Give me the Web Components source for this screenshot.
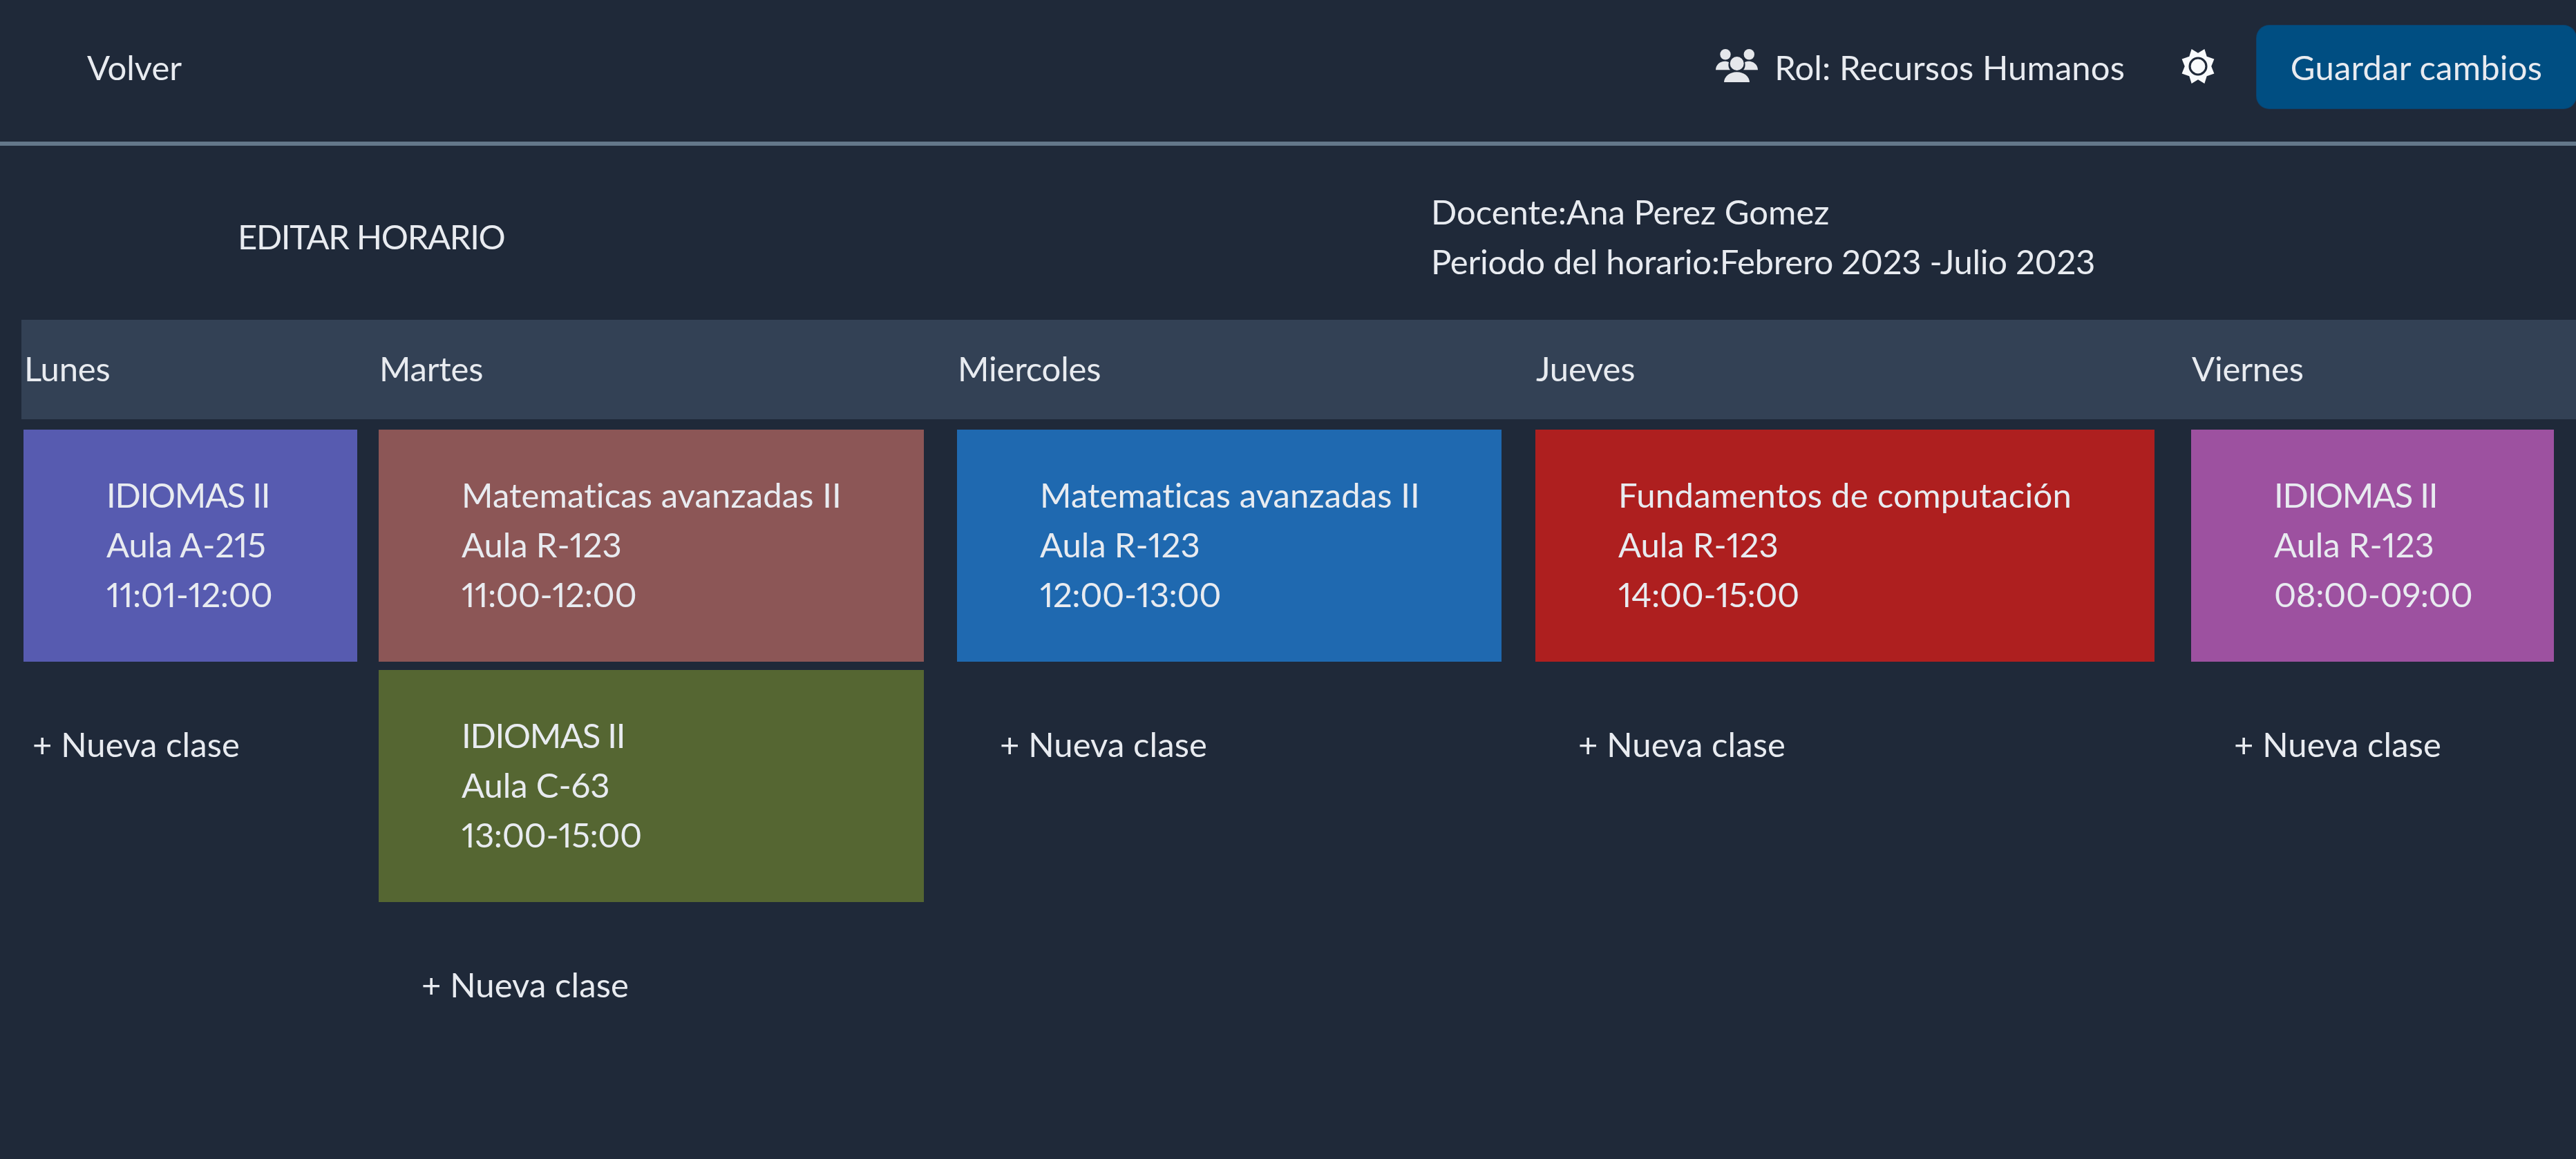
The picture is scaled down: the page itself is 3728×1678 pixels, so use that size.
<!doctype html>
<html lang="es"><head><meta charset="utf-8"><title>Editar horario</title>
<style>
html,body{margin:0;background:#1f2939;color:#e8ebf0;font:49px/72px Lato,"Liberation Sans",sans-serif;font-variant-ligatures:none;font-variant-numeric:proportional-nums;min-height:1678px}
</style></head><body>
<app-header></app-header>
<title-bar></title-bar>
<day-grid>
  <day-col day="Lunes" w="514" pr="31" add="14">
    <class-card color="#575bb0" name="IDIOMAS II" track="-1.3" room="Aula A-215" time="11:01-12:00"></class-card>
  </day-col>
  <day-col day="Martes" w="837" pr="48" add="63">
    <class-card color="#8c5656" name="Matematicas avanzadas II" track=".12" room="Aula R-123" time="11:00-12:00"></class-card>
    <class-card color="#556632" name="IDIOMAS II" track="-1.3" room="Aula C-63" time="13:00-15:00"></class-card>
  </day-col>
  <day-col day="Miercoles" w="837" pr="49" add="63">
    <class-card color="#1f69b0" name="Matematicas avanzadas II" track=".12" room="Aula R-123" time="12:00-13:00"></class-card>
  </day-col>
  <day-col day="Jueves" w="949" pr="53" add="63">
    <class-card color="#ae1f1f" name="Fundamentos de computación" track=".3" room="Aula R-123" time="14:00-15:00"></class-card>
  </day-col>
  <day-col day="Viernes" w="557" pr="32" add="63">
    <class-card color="#9d51a0" name="IDIOMAS II" track="-1.3" room="Aula R-123" time="08:00-09:00"></class-card>
  </day-col>
</day-grid>
<script>
const def=(n,html)=>customElements.define(n,class extends HTMLElement{
  constructor(){super();this.attachShadow({mode:'open'});if(typeof html!=='function')this.shadowRoot.innerHTML=html}
  connectedCallback(){if(typeof html==='function')this.shadowRoot.innerHTML=html(this)}
});
def('app-header',`<style>
:host{display:flex;align-items:center;height:205px;border-bottom:6px solid #64778a}
.row{display:flex;align-items:center;width:100%;height:120px;margin-top:-11px}
.back{margin-left:126px;margin-right:auto}
.role{display:flex;align-items:center;gap:24px}
.role span{letter-spacing:.1px}
.role svg{display:block;width:61px;height:48px;margin-top:-4px}
.sun{display:block;width:52px;height:52px;margin:-2px 59px 0 80px}
button{all:unset;box-sizing:border-box;width:462px;height:120px;background:#004e82;border-radius:18px;text-align:center;font:inherit;color:inherit;letter-spacing:.2px;box-shadow:0 0 0 1px #0a4370}
</style>
<div class="row">
<span class="back">Volver</span>
<span class="role">
<svg viewBox="0 0 61 48" fill="#e5e7eb"><circle cx="14" cy="7.7" r="7.7"/><circle cx="48.3" cy="7.7" r="7.7"/><circle cx="30.7" cy="21" r="10"/><path d="M12 48.3C12 40 20 33.3 30.5 33.3S49 40 49 48.3Z"/><path d="M0 30.3C0 23 6 17.7 13 17.7C15 17.7 17 18 19 19C18 22 18 27 21 30.3Z"/><path d="M61 30.3C61 23 55 17.7 48 17.7C46 17.7 44 18 42 19C43 22 43 27 40 30.3Z"/></svg>
<span>Rol: Recursos Humanos</span>
</span>
<svg class="sun" viewBox="-25 -25 50 50"><path fill="#f8fafc" d="M-9 -24L0 -18.5L9 -24L12.2 -13.6L22.5 -10L18.5 0L22.5 10L12.2 13.6L9 24L0 18.5L-9 24L-12.2 13.6L-22.5 10L-18.5 0L-22.5 -10L-12.2 -13.6Z"/><circle r="11.5" fill="#f8fafc" stroke="#1f2939" stroke-width="3"/></svg>
<button>Guardar cambios</button>
</div>`);
def('title-bar',`<style>
:host{display:grid;grid-template-columns:2071px 1fr;align-items:center;padding:59px 0 49px}
.t{padding-left:344px;letter-spacing:-1.35px}
div div{white-space:nowrap}
.p{letter-spacing:-.27px}
</style>
<div class="t">EDITAR HORARIO</div>
<div><div>Docente:Ana Perez Gomez</div><div class="p">Periodo del horario:Febrero 2023 -Julio 2023</div></div>`);
def('day-grid',`<style>:host{display:flex;margin-left:31px;position:relative}
:host::before{content:"";position:absolute;left:0;right:0;top:0;height:144px;background:#334155}
.g{display:flex;padding-left:3px;position:relative}</style><div class="g"><slot></slot></div>`);
def('day-col',el=>`<style>
:host{display:block;width:${el.getAttribute('w')}px;box-sizing:border-box;padding-right:${el.getAttribute('pr')}px}
.h{height:144px;line-height:140px;margin-bottom:15px;padding-left:1px;letter-spacing:-.2px}
.cards{display:flex;flex-direction:column;gap:12px}
.add{margin-top:83px;padding-left:${el.getAttribute('add')-1}px;white-space:nowrap;letter-spacing:.1px}
</style><div class="h">${el.getAttribute('day')}</div><div class="cards"><slot></slot></div><div class="add">+ Nueva clase</div>`);
def('class-card',el=>`<style>
:host{display:block;background:${el.getAttribute('color')};padding:58px 0 62px 120px;white-space:nowrap}
div{height:72px}
.n{letter-spacing:${el.getAttribute('track')}px}
.r{letter-spacing:-.1px}
.t{letter-spacing:-.4px}
</style><div class="n">${el.getAttribute('name')}</div><div class="r">${el.getAttribute('room')}</div><div class="t">${el.getAttribute('time')}</div>`);
</script>
</body></html>
